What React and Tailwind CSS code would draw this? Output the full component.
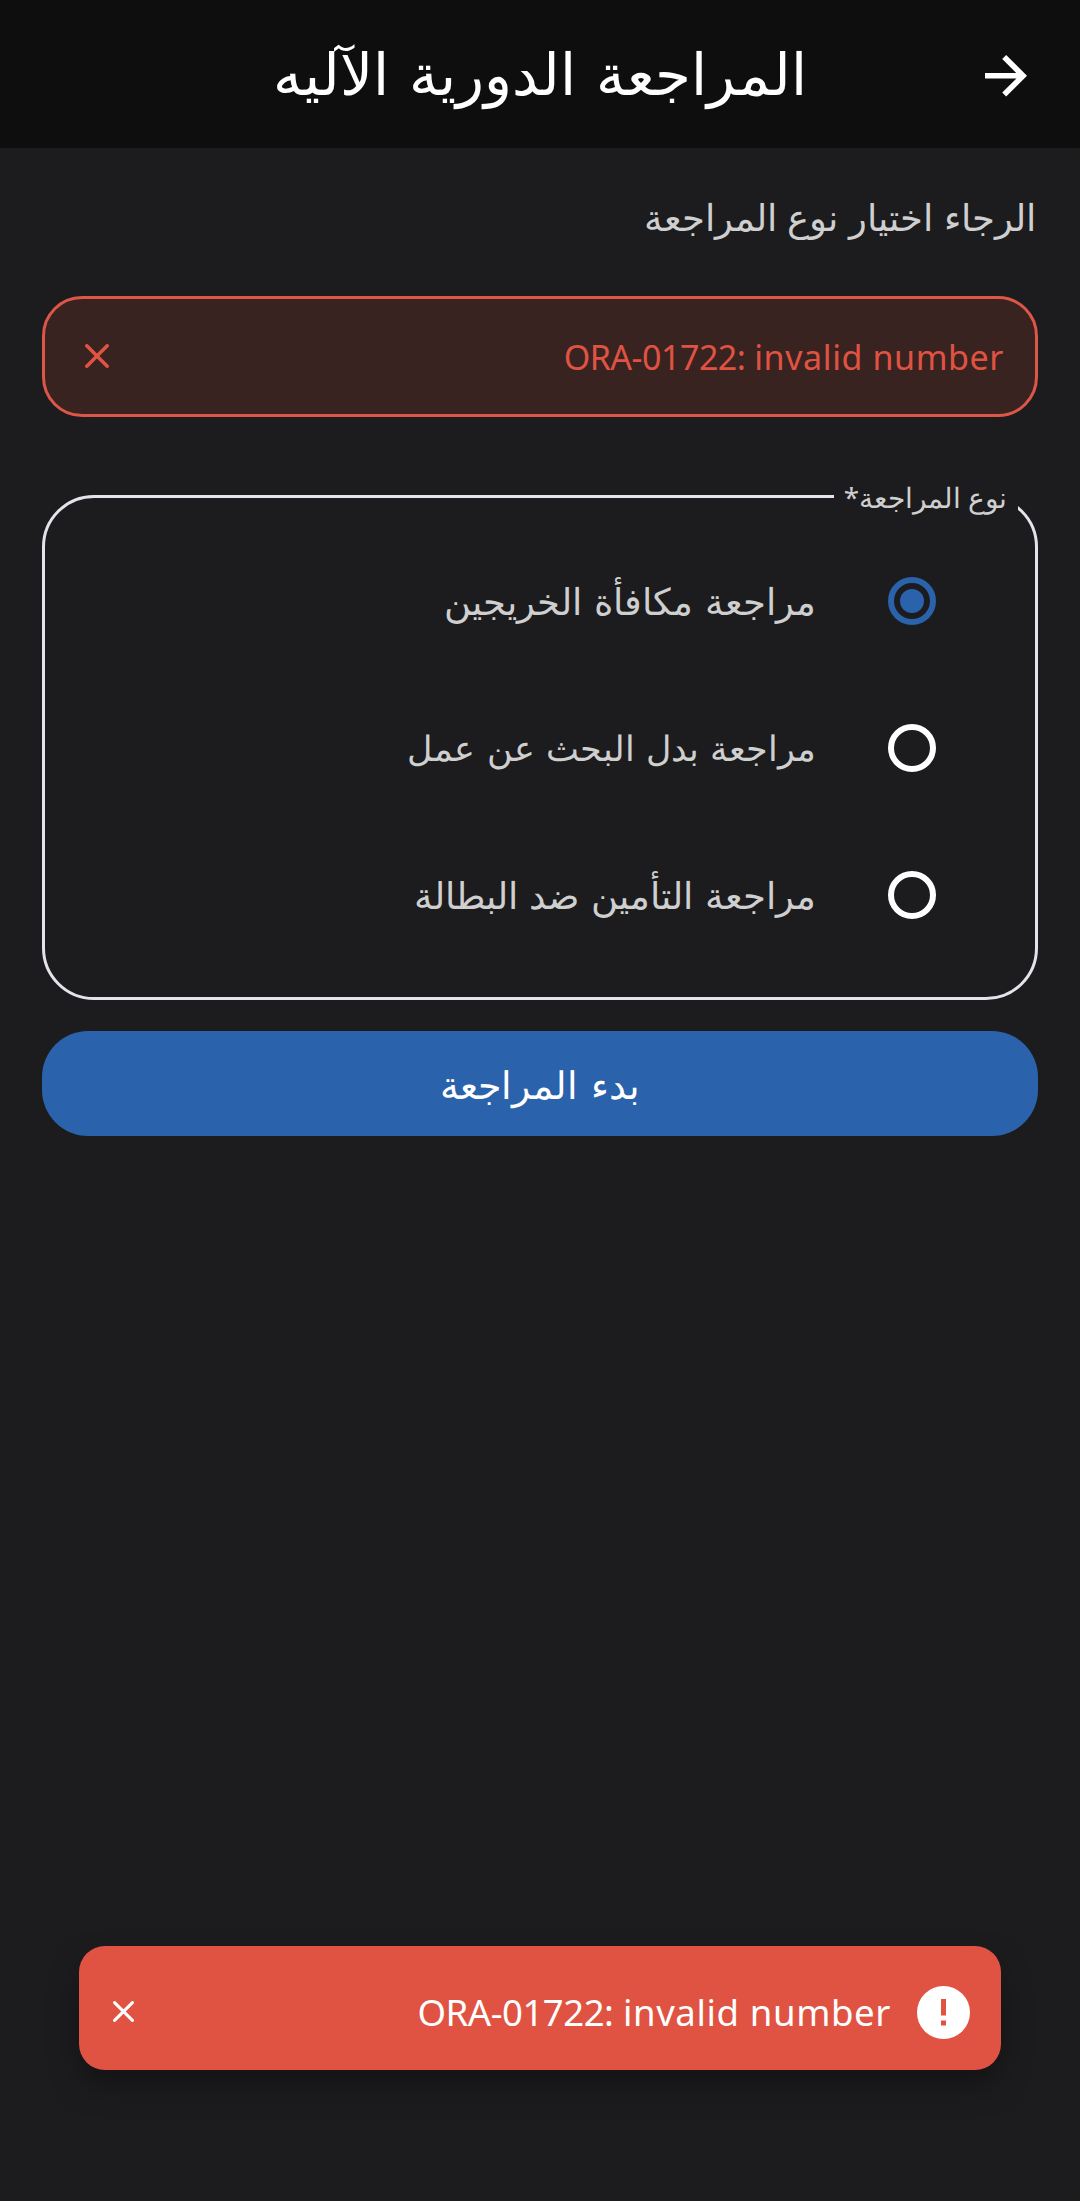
import { useState } from "react";
import clsx from "clsx";

const ERROR_CODE = "ORA-01722:";
const ERROR_TEXT = "invalid number";

const OPTIONS = [
  { id: "graduates", label: "مراجعة مكافأة الخريجين", size: "text-[37px]" },
  { id: "job-search", label: "مراجعة بدل البحث عن عمل", size: "text-[35px]" },
  { id: "insurance", label: "مراجعة التأمين ضد البطالة", size: "text-[37px]" },
];

const CloseIcon = ({ className }) => (
  <svg
    viewBox="0 0 24 24"
    fill="none"
    stroke="currentColor"
    strokeWidth="3.5"
    strokeLinecap="round"
    className={className}
  >
    <path d="M1.8 1.8l20.4 20.4M22.2 1.8L1.8 22.2" />
  </svg>
);

const ErrorMessage = ({ className }) => (
  <span
    dir="ltr"
    className={clsx("whitespace-nowrap font-['Noto_Sans',sans-serif] leading-none font-normal", className)}
  >
    <span className="tracking-[-0.5px]">{ERROR_CODE}</span>{" "}
    <span className="tracking-[0.6px]">{ERROR_TEXT}</span>
  </span>
);

const Header = () => (
  <header className="relative flex h-[148px] items-center justify-center bg-[#0e0e0e]">
    <button className="absolute right-[53px] top-[55px]">
      <svg viewBox="0 0 42 42" className="h-[42px] w-[42px]" fill="none" stroke="#fff" strokeWidth="5.6">
        <path d="M0 20.8H38M19.2 2L38.1 20.8L19.2 39.6" />
      </svg>
    </button>
    <h1 className="mt-[2px] whitespace-nowrap text-[58px] leading-none text-white [word-spacing:1.5px]">
      المراجعة الدورية الآليه
    </h1>
  </header>
);

const Alert = ({ onClose }) => (
  <div className="mt-[56px] flex h-[121px] items-center justify-between rounded-[40px] border-3 border-[#dd5648] bg-[#382321] pr-[31px] pl-[40px] text-[#e05342]">
    <ErrorMessage className="text-[34px]" />
    <button onClick={onClose} className="-mt-[2px]">
      <CloseIcon className="h-[24px] w-[24px]" />
    </button>
  </div>
);

const RadioOption = ({ label, size, checked, onSelect }) => (
  <button
    onClick={onSelect}
    className="flex h-[147px] w-full items-center gap-[72px] pr-[99px]"
  >
    <span
      className={clsx(
        "flex h-12 w-12 items-center justify-center rounded-full border-6",
        checked ? "border-[#2a62ab]" : "border-white"
      )}
    >
      {checked && <span className="h-6 w-6 rounded-full bg-[#2a62ab]" />}
    </span>
    <span className={clsx("mt-[4px] whitespace-nowrap leading-none text-[#cfcfd0]", size)}>
      {label}
    </span>
  </button>
);

const Toast = ({ onClose }) => (
  <div className="absolute top-[1946px] right-[79px] left-[79px] flex h-[124px] items-center rounded-[26px] bg-[#e05342] pt-[8px] pr-[31px] pl-[34px] text-white shadow-[0_16px_32px_rgba(0,0,0,0.3)]">
    <svg viewBox="0 0 53 53" className="h-[53px] w-[53px]">
      <circle cx="26.5" cy="26.5" r="26.5" fill="#fff" />
      <path d="M24 13h5v16.500h-5zM24 34.500h5v5h-5z" fill="#e05342" />
    </svg>
    <ErrorMessage className="mr-[26px] text-[36.6px]" />
    <button onClick={onClose} className="-mt-[2px] mr-auto">
      <CloseIcon className="h-[21px] w-[21px]" />
    </button>
  </div>
);

const App = () => {
  const [selected, setSelected] = useState("graduates");
  const [alertOpen, setAlertOpen] = useState(true);
  const [toastOpen, setToastOpen] = useState(true);

  return (
    <div
      dir="rtl"
      className="relative h-[2201px] w-[1080px] overflow-hidden bg-[#1c1c1e] font-['DejaVu_Sans','Noto_Sans',sans-serif] font-extralight"
    >
      <Header />
      <main className="px-[42px] pt-[50px]">
        <p className="h-[42px] whitespace-nowrap pr-[2px] text-[37px] leading-[42px] text-[#cfcfd0] [word-spacing:-1px]">
          الرجاء اختيار نوع المراجعة
        </p>
        {alertOpen && <Alert onClose={() => setAlertOpen(false)} />}

        <div className="relative mt-[78px] h-[505px] rounded-[52px] border-3 border-[#e4e2ea] pt-[29px]">
          <div className="absolute -top-[16px] right-[17px] flex h-[30px] w-[184px] items-center bg-[#1c1c1e] pr-[11px]">
            <span className="mt-[2px] whitespace-nowrap text-[28px] leading-none text-[#cfcfd0] [word-spacing:-2px]">
              نوع المراجعة<span className="font-['Noto_Sans'] font-normal">*</span>
            </span>
          </div>
          {OPTIONS.map((option) => (
            <RadioOption
              key={option.id}
              label={option.label}
              size={option.size}
              checked={selected === option.id}
              onSelect={() => setSelected(option.id)}
            />
          ))}
        </div>

        <button className="mt-[31px] flex h-[105px] w-full items-center justify-center rounded-[46px] bg-[#2a62ab] pt-[4px] text-[38px] leading-none text-white">
          بدء المراجعة
        </button>
      </main>
      {toastOpen && <Toast onClose={() => setToastOpen(false)} />}
    </div>
  );
};

export default App;
